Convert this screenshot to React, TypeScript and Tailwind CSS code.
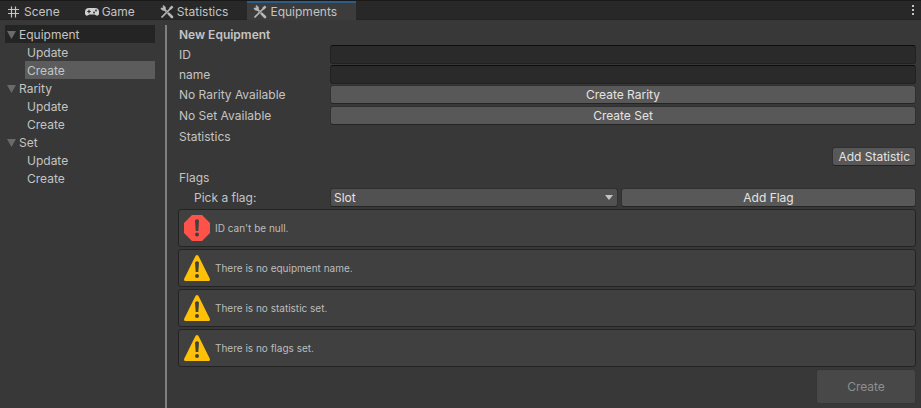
import React from "react";

const Grid = () => (
  <svg width="14" height="14" viewBox="0 0 14 14" className="shrink-0" stroke="#c4c4c4" fill="none" aria-hidden="true">
    <path d="M4.500 1.500v11M8.500 1.500v11M1 4.500h11M1 8.500h11" strokeWidth="1.200" />
  </svg>
);

const Gamepad = () => (
  <svg width="14" height="14" viewBox="0 0 14 14" className="shrink-0" aria-hidden="true">
    <path d="M4 3h6a4 4 0 0 1 4 4v1.500c0 2-2 2.800-3.200 1.700L9.800 9.500H4.200l-1 .7C2 11.300 0 10.500 0 8.500V7A4 4 0 0 1 4 3z" fill="#d0d0d0" />
    <path d="M4 4.800v3.400M2.300 6.500h3.400" stroke="#282828" strokeWidth="1.200" />
    <circle cx="9" cy="7.500" r=".9" fill="#282828" />
    <circle cx="11" cy="5.500" r=".9" fill="#282828" />
  </svg>
);

const Tools = () => (
  <svg width="14" height="14" viewBox="0 0 14 14" className="shrink-0" fill="none" stroke="#b8b8b8" aria-hidden="true">
    <path d="M4.500 4.500 6.300 6.300" strokeWidth="2" />
    <path d="M8.600 8.600 12 12" strokeWidth="2.600" strokeLinecap="round" />
    <path d="M3 .6 3.400 3 .9 3.100A2.600 2.600 0 0 0 4.800 5 2.600 2.600 0 0 0 3 .6z" fill="#b8b8b8" strokeWidth=".6" />
    <path d="M9.800 4.200 12.600 1.400" strokeWidth="2.400" />
    <path d="M10 4 1.500 12.500" strokeWidth="1.700" />
  </svg>
);

const ErrorIcon = () => (
  <svg width="28" height="28" viewBox="0 0 28 28" className="shrink-0" aria-hidden="true">
    <path d="M9 1h10l8 8v10l-8 8H9l-8-8V9z" fill="#ff534a" />
    <path d="M12 6.500q2-2.500 4 0l-.7 10.500h-2.600z" fill="#404040" />
    <circle cx="14" cy="20.500" r="2" fill="#404040" />
  </svg>
);

const WarningIcon = () => (
  <svg width="28" height="28" viewBox="0 0 28 28" className="shrink-0" aria-hidden="true">
    <path d="M12.500 2q1.500-2 3 0L26.700 24.500q.8 2.500-1.200 2.500h-23q-2 0-1.200-2.500z" fill="#ffc107" />
    <path d="M12 8.500q2-2.500 4 0l-.7 9.500h-2.600z" fill="#404040" />
    <circle cx="14" cy="22" r="2" fill="#404040" />
  </svg>
);

const tabs = [
  { name: "Scene", Icon: Grid },
  { name: "Game", Icon: Gamepad },
  { name: "Statistics", Icon: Tools },
  { name: "Equipments", Icon: Tools },
];

const groups = ["Equipment", "Rarity", "Set"];
const warnings = ["There is no equipment name.", "There is no statistic set.", "There is no flags set."];

const buttonStyle = "h-[19px] rounded-[3px] border border-[#303030] border-b-[#242424] bg-[#585858] text-center leading-[17px] text-[#e4e4e4]";
const inputStyle = "h-[19px] min-w-0 flex-1 rounded-[3px] border border-[#212121] border-t-[#0d0d0d] bg-[#2a2a2a] px-1 outline-none";
const tabStyle = "-mb-px flex items-center gap-[3px] border-t-2 pr-[19px] pl-1.5";
const groupStyle = "flex h-[18px] w-full items-center gap-[3px] pt-0.5 pl-0.5";
const itemStyle = "h-[18px] pt-0.5 pl-0.5 text-left leading-4";

function HelpBox({ text, children }: { text: string; children: React.ReactNode }) {
  return (
    <div className="flex h-[38px] items-center gap-1 rounded-[3px] border border-[#232323] bg-[#404040] px-1 text-[10px] text-[#bdbdbd]">
      {children}
      <span>{text}</span>
    </div>
  );
}

export default function App() {
  const active = "Equipments";
  return (
    <div className="flex min-h-screen flex-col bg-[#383838] font-['Inter',sans-serif] text-[12px] leading-[18px] text-[#c4c4c4]">
      <header className="flex h-5 items-stretch border-t border-b border-t-[#191919] border-b-[#232323] bg-[#282828]">
        <div role="tablist" className="flex flex-1 pl-px">
          {tabs.map(({ name, Icon }) => (
            <button
              key={name}
              role="tab"
              aria-selected={name === active}
              className={name === active ? `${tabStyle} border-[#2c5d87] bg-[#3c3c3c]` : `${tabStyle} border-transparent`}
            >
              <Icon />
              {name}
            </button>
          ))}
        </div>
        <button aria-label="Menu" className="flex flex-col items-center justify-center gap-[2px] px-[7px]">
          <span className="size-[2px] bg-[#c4c4c4]" />
          <span className="size-[2px] bg-[#c4c4c4]" />
          <span className="size-[2px] bg-[#c4c4c4]" />
        </button>
      </header>

      <div className="flex flex-1 pt-[5px]">
        <nav className="w-[165px] shrink-0 pr-2.5 pl-[5px]">
          {groups.map((group) => (
            <div key={group}>
              <button className={group === "Equipment" ? `${groupStyle} bg-[#242424]` : groupStyle}>
                <svg width="9" height="8" viewBox="0 0 9 8" aria-hidden="true">
                  <path d="M0 0h9L4.500 8z" fill="#6a6a6a" />
                </svg>
                {group}
              </button>
              <div className="flex flex-col pl-5">
                <button className={itemStyle}>Update</button>
                <button className={group === "Equipment" ? `${itemStyle} bg-[#5c5c5c]` : itemStyle}>Create</button>
              </div>
            </div>
          ))}
        </nav>

        <main className="min-w-0 flex-1 border-l-2 border-[#7f7f7f] pr-[5px] pl-[11px]">
          <h1 className="h-5 pl-px leading-5 font-semibold">New Equipment</h1>
          <div className="flex h-5">
            <label htmlFor="id" className="w-[152px] shrink-0 pl-px leading-5">ID</label>
            <input id="id" className={inputStyle} />
          </div>
          <div className="flex h-5">
            <label htmlFor="name" className="w-[152px] shrink-0 pl-px leading-5">name</label>
            <input id="name" className={inputStyle} />
          </div>
          <div className="flex h-[21px]">
            <span className="w-[152px] shrink-0 pl-px leading-5">No Rarity Available</span>
            <button className={`${buttonStyle} flex-1`}>Create Rarity</button>
          </div>
          <div className="flex h-[21px]">
            <span className="w-[152px] shrink-0 pl-px leading-5">No Set Available</span>
            <button className={`${buttonStyle} flex-1`}>Create Set</button>
          </div>
          <h2 className="h-5 pl-px leading-5">Statistics</h2>
          <div className="flex h-[21px] justify-end">
            <button className={`${buttonStyle} px-[5px]`}>Add Statistic</button>
          </div>
          <h2 className="h-5 pl-px leading-5">Flags</h2>
          <div className="flex h-[21px]">
            <label htmlFor="flag" className="w-[152px] shrink-0 pl-4 leading-5">Pick a flag:</label>
            <div className="relative mr-[3px] flex min-w-0 flex-1">
              <select id="flag" className="h-[19px] w-full appearance-none rounded-[3px] border border-[#303030] border-b-[#242424] bg-[#515151] pl-[3px] text-[#e4e4e4]">
                <option>Slot</option>
              </select>
              <svg width="8" height="5" viewBox="0 0 8 5" className="pointer-events-none absolute top-[7px] right-[5px]" aria-hidden="true">
                <path d="M0 0h8L4 5z" fill="#c4c4c4" />
              </svg>
            </div>
            <button className={`${buttonStyle} w-[295px]`}>Add Flag</button>
          </div>

          <div className="flex flex-col gap-0.5">
            <HelpBox text="ID can't be null.">
              <ErrorIcon />
            </HelpBox>
            {warnings.map((w) => (
              <HelpBox key={w} text={w}>
                <WarningIcon />
              </HelpBox>
            ))}
          </div>
          <div className="flex justify-end pt-0.5">
            <button disabled className="h-[35px] w-[100px] rounded-[3px] border border-[#353535] bg-[#484848] text-[#8e8e8e]">Create</button>
          </div>
        </main>
      </div>
    </div>
  );
}
